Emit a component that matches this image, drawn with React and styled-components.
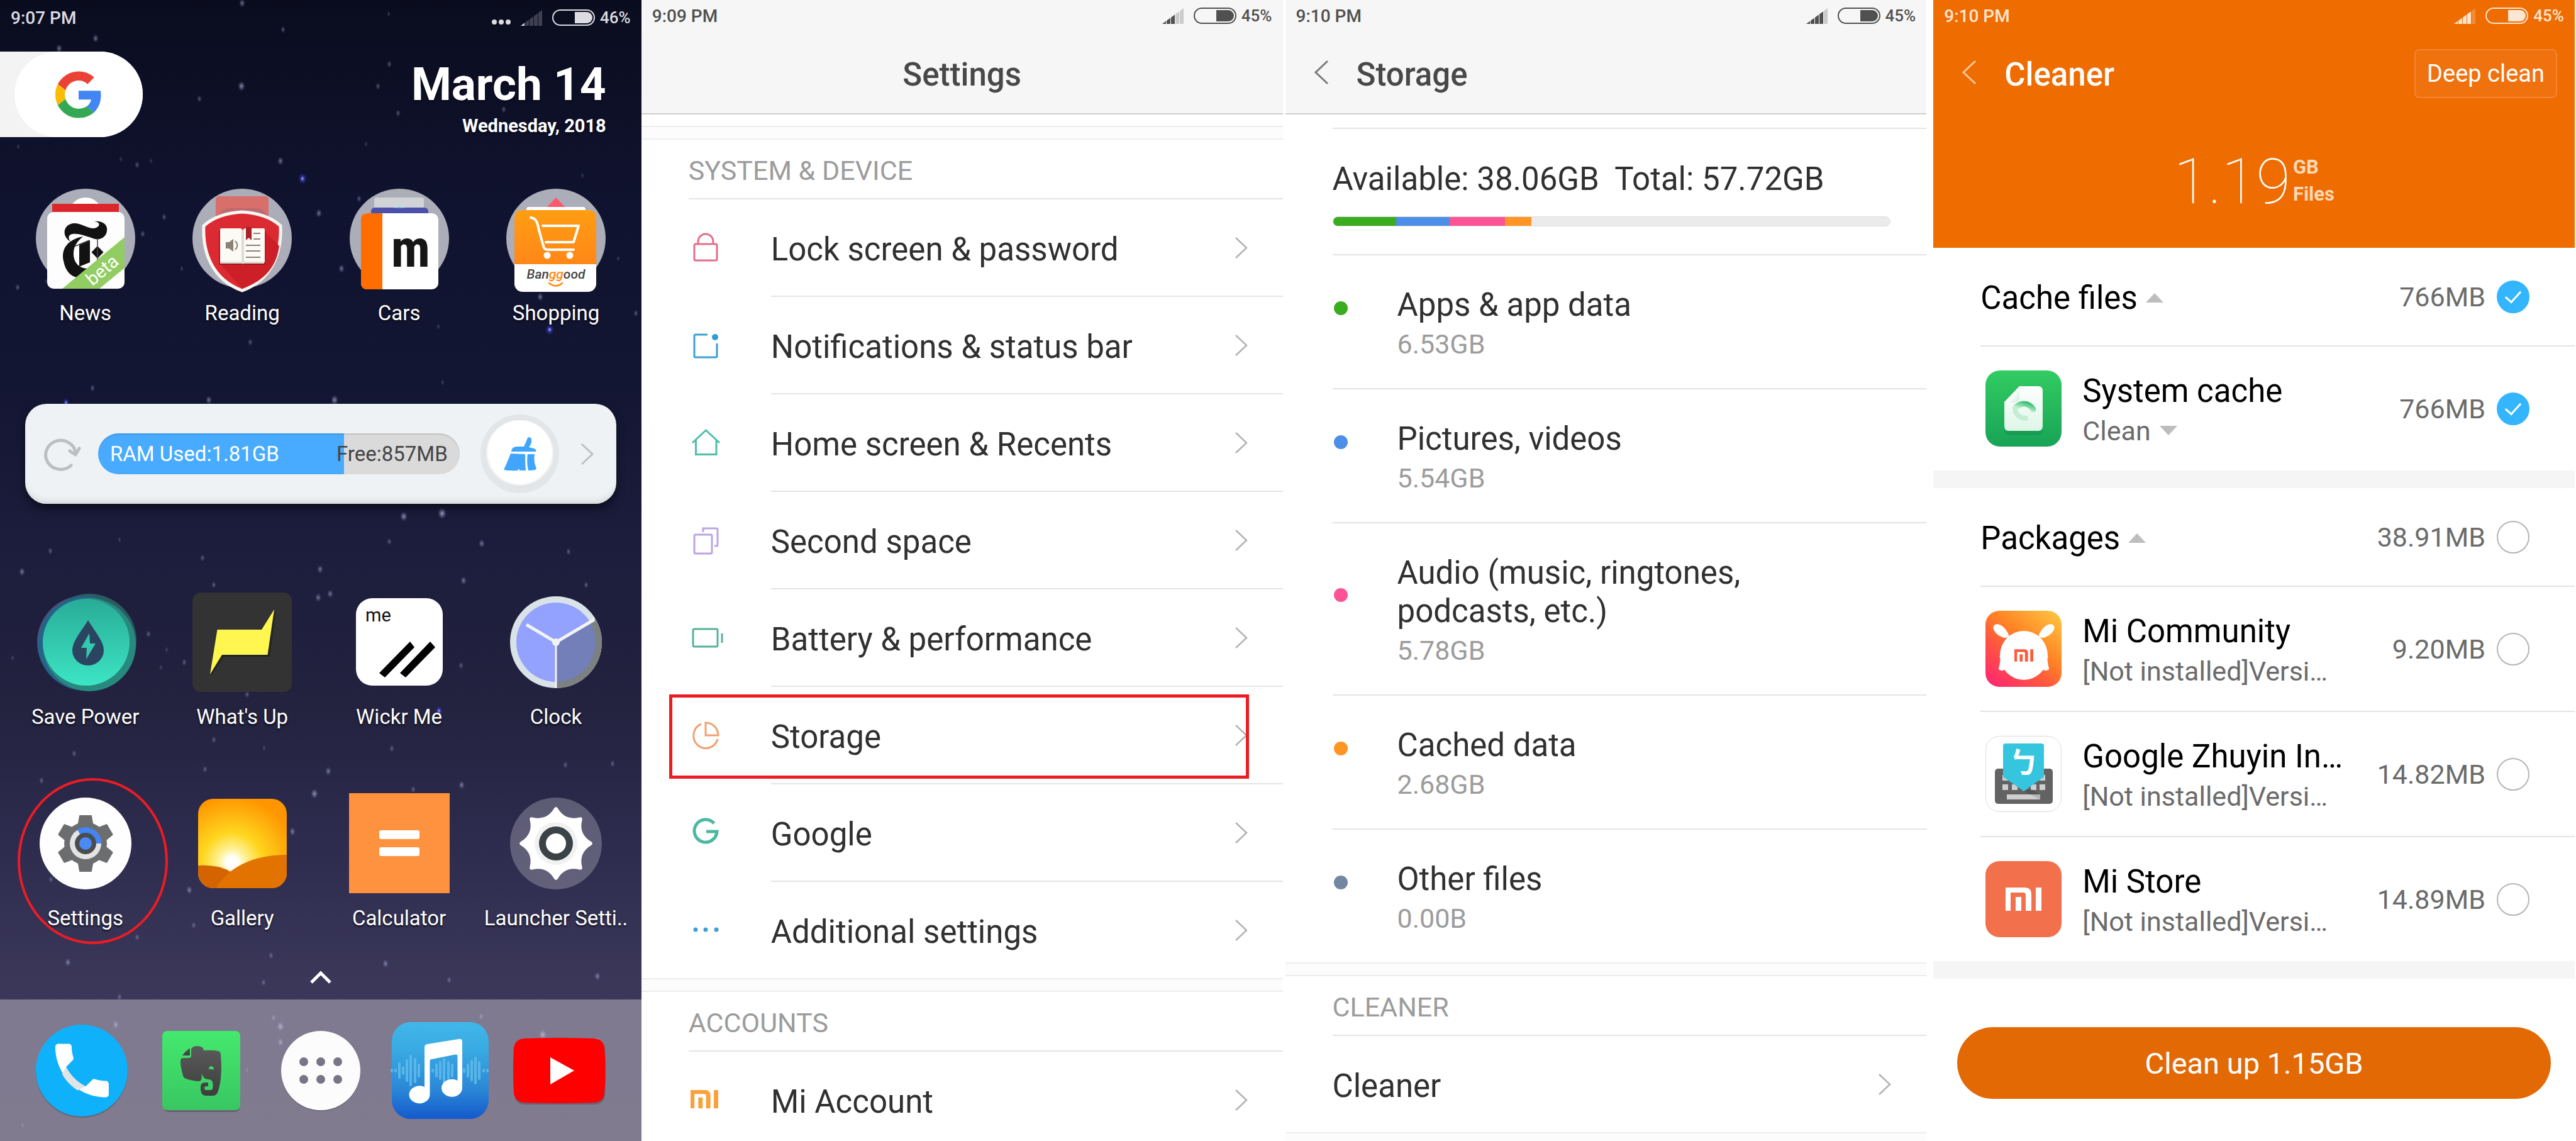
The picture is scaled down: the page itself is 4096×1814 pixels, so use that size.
import React from "react";
import styled, { createGlobalStyle, css } from "styled-components";

const GlobalStyle = createGlobalStyle`
  * {
    box-sizing: border-box;
    margin: 0;
    padding: 0;
  }
  body {
    background: #fff;
    font-family: Roboto, "Noto Sans", sans-serif;
  }
  button {
    font: inherit;
    color: inherit;
    background: none;
    border: none;
    cursor: pointer;
  }
  a {
    color: inherit;
    text-decoration: none;
  }
  ul {
    list-style: none;
  }
  svg {
    display: block;
    flex: none;
    overflow: visible;
    text-shadow: none;
  }
`;

const line = "2px solid #e4e4e4";

const Board = styled.main`
  display: flex;
  height: 100vh;
  overflow: hidden;
  padding-right: 2px;
`;

const Screen = styled.section`
  position: relative;
  flex: 1 1 0;
  min-width: 0;
  display: flex;
  flex-direction: column;
  overflow: hidden;
  margin-left: ${({ $gap }) => $gap || 0}px;
  background: #fff;
  color: #303030;
`;

/* ---------- status bar ---------- */

const StatusRow = styled.div`
  position: relative;
  display: flex;
  align-items: center;
  justify-content: space-between;
  height: ${({ $tall }) => ($tall ? 56 : 50)}px;
  padding: 0 17px;
  font-size: 28px;
  font-weight: 500;
  color: ${({ $color }) => $color};
`;

const StatusIcons = styled.div`
  display: flex;
  align-items: center;
  gap: 8px;
`;

const Percent = styled.span`
  font-size: 26px;
`;

const Dots = styled.svg`
  align-self: flex-end;
  margin-right: 8px;
`;

const Battery = styled.span`
  display: flex;
  justify-content: flex-end;
  width: 68px;
  height: 26px;
  padding: 2px;
  margin-left: 8px;
  border: 2px solid currentColor;
  border-radius: 13px;

  &::after {
    content: "";
    width: 28px;
    border-radius: 0 10px 10px 0;
    background: currentColor;
  }
`;

const Signal = ({ level }) => (
  <svg width="34" height="25" viewBox="0 0 34 25" fill="currentColor">
    {[0, 1, 2, 3, 4].map((i) => {
      const x = i * 7;
      const y1 = 25 - (x * 25) / 34;
      const y2 = 25 - ((x + 6) * 25) / 34;
      return (
        <path
          key={i}
          d={`M${x} 25V${y1}L${x + 6} ${y2}V25z`}
          opacity={i < level ? 1 : 0.25}
        />
      );
    })}
  </svg>
);

const StatusBar = ({ time, percent, level, color, tall, more }) => (
  <StatusRow $color={color} $tall={tall}>
    <span>{time}</span>
    <StatusIcons>
      {more && (
        <Dots width="30" height="8" viewBox="0 0 30 8" fill="currentColor">
          <circle cx="4" cy="0" r="4" />
          <circle cx="15" cy="0" r="4" />
          <circle cx="26" cy="0" r="4" />
        </Dots>
      )}
      <Signal level={level} />
      <Battery />
      <Percent>{percent}</Percent>
    </StatusIcons>
  </StatusRow>
);

/* ---------- home screen ---------- */

const Home = styled(Screen)`
  background: linear-gradient(
    #0a0c1e 0%,
    #10132f 18%,
    #131633 34%,
    #1c1d3c 48%,
    #23223f 62%,
    #2e2c4e 74%,
    #3a3759 86%,
    #3f3957 100%
  );
  color: #fff;
`;

const Sky = styled.svg`
  position: absolute;
  inset: 0;
`;

const HomeTop = styled.div`
  position: relative;
  display: flex;
  justify-content: space-between;
  align-items: flex-end;
  margin-top: 26px;
  padding-right: 56px;
`;

const SearchPill = styled.button`
  display: flex;
  width: 227px;
  height: 136px;
  padding-left: 23px;
  border-radius: 0 68px 68px 0;
  background: #f3f3f3;
`;

const SearchKnob = styled.span`
  display: flex;
  align-items: center;
  justify-content: center;
  width: 204px;
  height: 136px;
  border-radius: 68px;
  background: #fff;
`;

const DateBlock = styled.div`
  display: flex;
  flex-direction: column;
  align-items: flex-end;
  gap: 8px;
  font-weight: 700;
  text-shadow: 0 2px 3px rgba(0, 0, 0, 0.5);
`;

const Today = styled.h1`
  font-size: 73px;
  line-height: 80px;
`;

const Weekday = styled.p`
  font-size: 29px;
  line-height: 36px;
`;

const AppGrid = styled.div`
  position: relative;
  display: grid;
  grid-template-columns: repeat(4, 1fr);
  margin-top: ${({ $top }) => $top}px;
  padding: 0 11px;
`;

const AppButton = styled.button`
  position: relative;
  display: flex;
  flex-direction: column;
  align-items: center;
  gap: 19px;
  font-size: 33px;
  line-height: 40px;
  white-space: nowrap;
  text-shadow: 0 2px 3px rgba(0, 0, 0, 0.8);
`;

const RedCircle = styled.span`
  position: absolute;
  left: 17px;
  top: -24px;
  width: 239px;
  height: 264px;
  border: 4px solid #ed1c24;
  border-radius: 50%;
`;

const Widget = styled.div`
  position: relative;
  display: flex;
  align-items: center;
  height: 159px;
  margin: 124px 40px 0;
  padding: 0 36px 0 30px;
  border-radius: 34px;
  background: #eff2f4;
  box-shadow: 0 8px 14px rgba(0, 0, 0, 0.5), inset 0 -10px 10px -6px #d3d7d8;
`;

const RamBar = styled.div`
  position: relative;
  flex: 1;
  display: flex;
  align-items: center;
  justify-content: space-between;
  height: 65px;
  margin: 0 33px 0 28px;
  padding: 0 19px;
  border-radius: 33px;
  background: linear-gradient(
    90deg,
    #48abff 0 68%,
    #dadada 68% 100%
  );
  box-shadow: inset 0 2px 2px rgba(0, 0, 0, 0.12);
  font-size: 33px;
`;

const RamFree = styled.span`
  color: #444;
`;

const BroomButton = styled.button`
  display: flex;
  align-items: center;
  justify-content: center;
  width: 125px;
  height: 125px;
  margin-right: 35px;
  border: 9px solid #e2e6e8;
  border-radius: 50%;
  background: #fff;
  box-shadow: inset 0 -3px 4px #d5d8da;
`;

const DrawerButton = styled.button`
  position: relative;
  display: flex;
  align-items: center;
  justify-content: center;
  height: 70px;
  margin-top: auto;
`;

const Dock = styled.nav`
  position: relative;
  display: grid;
  grid-template-columns: repeat(5, 1fr);
  justify-items: center;
  align-items: center;
  height: 225px;
  padding: 0 35px;
  background: rgba(222, 215, 222, 0.42);
`;

/* x, y, radius of every star of the wallpaper */
const stars = [
  [385, 5, 4], [152, 61, 4], [94, 77, 4], [619, 102, 3], [618, 22, 2], [450, 47, 3],
  [384, 137, 5], [317, 157, 3], [633, 180, 3], [446, 256, 4], [218, 262, 3], [240, 256, 2],
  [582, 229, 2], [261, 345, 3], [507, 339, 4], [571, 316, 3], [569, 365, 5], [227, 372, 3],
  [543, 427, 4], [289, 427, 2], [697, 519, 2], [859, 472, 4], [398, 544, 3], [28, 457, 3],
  [983, 411, 2], [926, 279, 2], [601, 137, 3], [1011, 498, 3], [74, 447, 2], [29, 233, 2],
  [192, 253, 2], [801, 174, 3], [332, 636, 4], [532, 636, 5], [642, 821, 5], [703, 816, 6],
  [766, 864, 4], [619, 861, 3], [322, 887, 3], [80, 876, 3], [35, 909, 4], [509, 905, 4],
  [737, 923, 4], [525, 944, 4], [506, 950, 4], [904, 877, 3], [340, 930, 3], [236, 1008, 3],
  [293, 1053, 3], [932, 930, 3], [265, 1033, 2], [20, 1046, 2], [733, 1058, 3], [393, 1104, 3],
  [190, 858, 2], [256, 1061, 2], [147, 617, 3], [704, 608, 2], [340, 1176, 3], [420, 1189, 2],
  [118, 1198, 3], [623, 1190, 3], [899, 1216, 3], [974, 1214, 3], [522, 1226, 4], [326, 1223, 3],
  [66, 1241, 3], [500, 1262, 5], [657, 1255, 3], [734, 1248, 4], [465, 1322, 4], [81, 1398, 3],
  [301, 1415, 4], [218, 1490, 3], [431, 1519, 3], [108, 1530, 4], [613, 1532, 4], [950, 1552, 4],
  [419, 1562, 3], [190, 1585, 3], [714, 1558, 3], [184, 1629, 4], [446, 1632, 5], [435, 1618, 3],
  [765, 1616, 3], [863, 1645, 5], [950, 1655, 4], [446, 1657, 4], [393, 1701, 2], [36, 1789, 2],
  [308, 1471, 3],
];

const blueStars = [
  [481, 284, 5], [874, 524, 5], [105, 640, 3], [698, 1130, 4],
];

const Wallpaper = () => (
  <Sky width="100%" height="100%" aria-hidden="true">
    <defs>
      <radialGradient id="star">
        <stop offset="0" stopColor="#c9cdf0" stopOpacity="0.8" />
        <stop offset="1" stopColor="#8288c0" stopOpacity="0" />
      </radialGradient>
      <radialGradient id="blueStar">
        <stop offset="0" stopColor="#b9bdff" />
        <stop offset="0.4" stopColor="#3c40c8" stopOpacity="0.7" />
        <stop offset="1" stopColor="#2226a0" stopOpacity="0" />
      </radialGradient>
    </defs>
    {stars.map(([x, y, r]) => (
      <ellipse key={`${x}-${y}`} cx={x} cy={y} rx={r + 1} ry={r + 3} fill="url(#star)" opacity={r / 6} />
    ))}
    {blueStars.map(([x, y, r]) => (
      <ellipse key={`${x}-${y}`} cx={x} cy={y} rx={r + 2} ry={r + 4} fill="url(#blueStar)" />
    ))}
  </Sky>
);

const GoogleLogo = () => (
  <svg width="68" height="69" viewBox="2 2 44 44">
    <path fill="#EA4335" d="M24 9.5c3.54 0 6.71 1.22 9.21 3.6l6.85-6.85C35.9 2.38 30.47 0 24 0 14.62 0 6.51 5.38 2.56 13.22l7.98 6.19C12.43 13.72 17.74 9.5 24 9.5z" />
    <path fill="#4285F4" d="M46.98 24.55c0-1.57-.15-3.09-.38-4.55H24v9.02h12.94c-.58 2.96-2.26 5.48-4.78 7.18l7.73 6c4.51-4.18 7.09-10.36 7.09-17.65z" />
    <path fill="#FBBC05" d="M10.53 28.59c-.48-1.45-.76-2.99-.76-4.59s.27-3.14.76-4.59l-7.98-6.19C.92 16.46 0 20.12 0 24c0 3.88.92 7.54 2.56 10.78l7.97-6.19z" />
    <path fill="#34A853" d="M24 48c6.48 0 11.93-2.13 15.89-5.81l-7.73-6c-2.15 1.45-4.92 2.3-8.16 2.3-6.26 0-11.57-4.22-13.47-9.91l-7.98 6.19C6.51 42.62 14.62 48 24 48z" />
  </svg>
);

const Icon = ({ children }) => (
  <svg width="160" height="160" viewBox="0 0 160 160" aria-hidden="true">
    {children}
  </svg>
);

const Folder = ({ children }) => (
  <Icon>
    <circle cx="80" cy="80" r="79" fill="#abadb8" />
    {children}
  </Icon>
);

const NewsIcon = () => (
  <Folder>
    <circle cx="80" cy="42" r="27" fill="#fff" />
    <path fill="#db272b" d="M27 25h106v16H27z" />
    <rect x="19" y="38" width="123" height="122" rx="10" fill="#fdfdfd" />
    <g fill="#121212">
      <path d="M56 85C45 79 43 64 54 58C69 50 85 68 97 63C104 60 103 54 94 53C106 51 116 58 114 68C113 78 103 83 95 81C82 77 66 70 56 74C52 77 53 81 56 85z" />
      <path d="M76 77C50 82 41 98 45 116C48 132 57 141 67 142L84 128C68 128 60 116 61 102C62 90 68 84 76 77z" />
      <path d="M70 90L87 83V118L70 125z" />
      <path d="M99 92L108.500 102L99 112L89.500 102z" />
    </g>
    <path d="M99 80V131M62 93L86 83" stroke="#444" strokeWidth="1.500" />
    <path d="M142 78V127L102 160H43z" fill="#92cd63" />
    <text x="107" y="140" fontSize="29" fill="#fff" textAnchor="middle" transform="rotate(-40 107 131)">
      beta
    </text>
  </Folder>
);

const ReadingIcon = () => (
  <Folder>
    <rect x="38" y="13" width="84" height="50" rx="5" fill="#d86f6b" />
    <path d="M42 44Q48 32 60 32H102Q114 32 119 44z" fill="#bd6a70" />
    <path d="M80 38C103 39 126 46 141 60C143 102 128 145 80 163C32 145 17 102 19 60C34 46 57 39 80 38z" fill="#dc2a32" stroke="#f8f6f2" strokeWidth="5" />
    <path d="M115 68L139 92C135 122 119 146 80 160L45 120z" fill="#cc1f27" />
    <path d="M43 68H117V122H43z" fill="#8f151c" opacity="0.7" />
    <path d="M45 66q0-2 2-2H78l3 3 3-3h30q2 0 2 2v52H84l-3 3-3-3H45z" fill="#fbfaf4" />
    <path d="M79 66h4v53h-4zM45 117h70v3H45z" fill="#dcdbd4" />
    <path d="M86 62h9v21l-4.500-4l-4.500 4z" fill="#ac1f27" />
    <path d="M98 72h11M98 81h11M86 91h23M86 100h23M86 110h23" stroke="#8c8174" strokeWidth="2" />
    <path d="M54 86h5l7-5v20l-7-5h-5z" fill="#8c8174" />
    <path d="M69 84q7 7 0 14" fill="none" stroke="#8c8174" strokeWidth="2" />
  </Folder>
);

const CarsIcon = () => (
  <Folder>
    <rect x="40" y="15" width="79" height="40" rx="4" fill="#d1d3d7" />
    <rect x="35" y="31" width="91" height="40" rx="6" fill="#4c50a8" />
    <path d="M70 32q10-3 20 0z" fill="#3fa9e8" />
    <rect x="19" y="41" width="123" height="122" rx="11" fill="#0002" />
    <rect x="19" y="40" width="123" height="121" rx="10" fill="#fff" />
    <path d="M53 40H29q-10 0-10 10v101q0 10 10 10h24z" fill="#ff6d00" />
    <text x="98" y="125" fontSize="84" fontWeight="700" fontFamily="'Roboto Condensed', 'Liberation Sans Narrow', Roboto, sans-serif" fill="#161616" textAnchor="middle">
      m
    </text>
  </Folder>
);

const ShoppingIcon = () => (
  <Folder>
    <path d="M80 15L97 33H63z" fill="#fb5a6c" />
    <rect x="33" y="30" width="94" height="20" rx="4" fill="#fff" />
    <rect x="14" y="35" width="130" height="130" rx="13" fill="#fff" />
    <path d="M14 121V48q0-13 13-13h104q13 0 13 13v73z" fill="url(#bangOrange)" />
    <defs>
      <linearGradient id="bangOrange" x1="0" y1="0" x2="0" y2="1">
        <stop offset="0" stopColor="#ff9d12" />
        <stop offset="1" stopColor="#ff8718" />
      </linearGradient>
    </defs>
    <g fill="none" stroke="#fff" strokeWidth="4" strokeLinecap="round" strokeLinejoin="round">
      <path d="M40 47C50 48 51 58 53 67L60 92Q61 98 67 98H108" />
      <path d="M59 60H116L108 86H64" />
    </g>
    <circle cx="66" cy="107" r="5.500" fill="#fff" />
    <circle cx="102" cy="107" r="5.500" fill="#fff" />
    <text x="80" y="144" fontSize="21" fontWeight="500" fontStyle="italic" fill="#444" textAnchor="middle">
      Ban<tspan fill="#ff8a12">gg</tspan>ood
    </text>
    <path d="M69 151q11 9 21 0" fill="none" stroke="#ff8a12" strokeWidth="2.500" strokeLinecap="round" />
  </Folder>
);

const SavePowerIcon = () => (
  <Icon>
    <defs>
      <linearGradient id="teal" x1="0" y1="0" x2="0" y2="1">
        <stop offset="0" stopColor="#29ab97" />
        <stop offset="1" stopColor="#3ce5c5" />
      </linearGradient>
    </defs>
    <circle cx="77" cy="80" r="74" fill="#5d4a6d" />
    <circle cx="86" cy="78" r="75" fill="#2a5c62" />
    <circle cx="79" cy="82" r="75" fill="#236489" />
    <circle cx="86" cy="84" r="74" fill="#28897f" />
    <circle cx="81" cy="80" r="69" fill="url(#teal)" />
    <path d="M84 45C94 62 109 78 109 93A25 24 0 0 1 59 93C59 78 74 62 84 45z" fill="#2b4560" />
    <path d="M86 66L73 89h9l-1 18l15-25h-9z" fill="#33c9b0" />
  </Icon>
);

const WhatsUpIcon = () => (
  <Icon>
    <rect x="1" y="1" width="158" height="158" rx="13" fill="#333" />
    <path d="M43 63h71l20-32l-10 72H51l-20 31z" fill="#252525" />
    <path d="M40.500 60H111L131 28L120.500 100H48L29 131z" fill="#fff750" />
  </Icon>
);

const WickrIcon = () => (
  <Icon>
    <rect x="11" y="10" width="138" height="139" rx="26" fill="#fff" />
    <text x="26" y="47" fontSize="29" fill="#111">
      me
    </text>
    <path d="M97 79L104 88L57 136L48 129zM129 79L137 88L90 136L81 129z" fill="#000" />
  </Icon>
);

const ClockIcon = () => (
  <Icon>
    <circle cx="80" cy="80" r="73" fill="#d9e2e7" />
    <circle cx="80" cy="80" r="63" fill="#93a2ff" />
    <path d="M80 80L143 43A73 73 0 0 1 80 153z" fill="#7b8081" />
    <path d="M80 80L134 48A63 63 0 0 1 80 143z" fill="#727fb8" />
    <g stroke="#f3f3f3" strokeWidth="5">
      <path d="M80 80L33 52M80 80L141 44" />
      <path d="M80 80V153" strokeWidth="3" />
    </g>
    <circle cx="80" cy="80" r="6" fill="#f3f3f3" />
  </Icon>
);

const SettingsIcon = () => (
  <Icon>
    <circle cx="80" cy="80" r="73" fill="#fefefe" />
    <g fill="#6c6d6e">
      <circle cx="80" cy="80" r="34" />
      {[0, 60, 120, 180, 240, 300].map((deg) => (
        <path key={deg} d="M70 36Q70 35 71 35H89Q90 35 90 36L93 54H67z" transform={`rotate(${deg} 80 80)`} />
      ))}
    </g>
    <circle cx="80" cy="80" r="25" fill="#e3e3e3" />
    <path d="M80 80L67 58A25 25 0 0 1 105 80z" fill="#4285f4" />
    <circle cx="80" cy="80" r="17" fill="#4b4c4e" />
    <circle cx="80" cy="80" r="10" fill="#4a8af4" />
  </Icon>
);

const GalleryIcon = () => (
  <Icon>
    <defs>
      <radialGradient id="sun" cx="64" cy="110" r="105" gradientUnits="userSpaceOnUse">
        <stop offset="0.08" stopColor="#fff" />
        <stop offset="0.2" stopColor="#fff29a" />
        <stop offset="0.45" stopColor="#ffd61e" />
        <stop offset="1" stopColor="#ff9500" />
      </radialGradient>
      <clipPath id="galleryCard">
        <rect x="10" y="9" width="141" height="142" rx="24" />
      </clipPath>
    </defs>
    <g clipPath="url(#galleryCard)">
      <path d="M10 9h141v142H10z" fill="url(#sun)" />
      <path d="M10 115Q42 113 62 125L64 151H10z" fill="#d46400" />
      <path d="M39 151C58 118 96 98 151 98V151z" fill="#e37300" />
    </g>
  </Icon>
);

const CalculatorIcon = () => (
  <Icon>
    <path d="M0 0h160v159H0z" fill="#ff923e" />
    <rect x="48" y="59" width="64" height="14" rx="3" fill="#fff" />
    <rect x="48" y="86" width="64" height="14" rx="3" fill="#fff" />
  </Icon>
);

// eight rounded tips, joined by shallow concave edges
const cog = () => {
  const at = (r, deg) => {
    const a = (deg * Math.PI) / 180;
    return `${80 + r * Math.cos(a)} ${80 + r * Math.sin(a)}`;
  };
  let d = `M${at(56, 3)}`;
  for (let deg = 0; deg < 360; deg += 45) {
    d += `C${at(44, deg + 14)} ${at(44, deg + 31)} ${at(56, deg + 42)}`;
    d += `Q${at(60, deg + 45)} ${at(56, deg + 48)}`;
  }
  return `${d}z`;
};

const LauncherIcon = () => (
  <Icon>
    <circle cx="80" cy="80" r="73" fill="#fff" opacity="0.24" />
    <path d={cog()} fill="#fff" />
    <circle cx="80" cy="80" r="34" fill="#f1f1f1" />
    <circle cx="80" cy="80" r="27" fill="#3b4346" />
    <circle cx="80" cy="80" r="16" fill="#fff" />
  </Icon>
);

const PhoneIcon = () => (
  <Icon>
    <circle cx="80" cy="82" r="73" fill="#0003" />
    <circle cx="80" cy="80" r="73" fill="#10b1fb" />
    <g transform="translate(23.800 23.300) scale(4.720)">
      <path fill="#fff" d="M6.620 10.790c1.440 2.830 3.760 5.140 6.590 6.590l2.200-2.200c.27-.27.67-.36 1.020-.24 1.120.37 2.330.57 3.570.57.55 0 1 .45 1 1V20c0 .55-.45 1-1 1-9.390 0-17-7.610-17-17 0-.55.45-1 1-1h3.500c.55 0 1 .45 1 1 0 1.250.2 2.450.57 3.570.11.35.03.74-.25 1.020l-2.200 2.200z" />
      <path fill="#e1e4e5" d="M6.620 10.790c1.440 2.830 3.760 5.140 6.590 6.590l-2.700 1.300C8.200 17.200 6.400 15.300 5.300 13.200z" />
    </g>
  </Icon>
);

const EvernoteIcon = () => (
  <Icon>
    <defs>
      <linearGradient id="evergreen" x1="0" y1="0" x2="0" y2="1">
        <stop offset="0" stopColor="#44e96d" />
        <stop offset="1" stopColor="#39c662" />
      </linearGradient>
      <linearGradient id="slate" x1="0" y1="0" x2="0" y2="1">
        <stop offset="0" stopColor="#5b5b5b" />
        <stop offset="1" stopColor="#3d3d3d" />
      </linearGradient>
    </defs>
    <rect x="20" y="22" width="121" height="124" rx="8" fill="#0003" />
    <rect x="18" y="17" width="124" height="126" rx="8" fill="url(#evergreen)" />
    <path
      fill="url(#slate)"
      d="M47 65Q47 60 52 60H60Q64 60 64 56V46Q66 41 74 41Q83 41 84 48Q98 47 107 49Q111 50 111 55Q114 90 107 112Q105 120 98 120H89Q79 120 79 110V106Q79 99 86 99H91V105H88Q85 105 85 108Q85 111 88 111H95Q98 111 98.500 107V101Q98.500 95 92 94Q83 94 80.500 84Q82 97 76 97Q64 96 56 93Q52 92 51 88Q47 74 47 65z"
    />
    <path d="M50 56Q55 49 62 44V56z" fill="url(#slate)" />
    <path d="M92 78Q92 73 96.500 73Q100 74 100 79Q96 77 92 78z" fill="#41d667" />
  </Icon>
);

const AppsIcon = () => (
  <Icon>
    <circle cx="80" cy="82" r="63" fill="#0002" />
    <circle cx="80" cy="80" r="63" fill="#fcfcfc" />
    {[66, 94].map((y) =>
      [53, 80, 107].map((x) => <circle key={`${x}-${y}`} cx={x} cy={y} r="7" fill="#7a7586" />)
    )}
  </Icon>
);

const waves = [
  [3, 1], [9, 1], [15, 11], [21, 5], [27, 16], [33, 23], [40, 18], [46, 9], [68, 1], [74, 9],
  [80, 13], [86, 18], [93, 13], [99, 9], [118, 2], [124, 9], [130, 15], [136, 20], [142, 13],
  [149, 1], [155, 1],
];

const MusicIcon = () => (
  <Icon>
    <defs>
      <linearGradient id="musicBlue" x1="0" y1="0" x2="0" y2="1">
        <stop offset="0" stopColor="#41b7e9" />
        <stop offset="0.3" stopColor="#38a9e2" />
        <stop offset="0.7" stopColor="#2a86d6" />
        <stop offset="1" stopColor="#1459cc" />
      </linearGradient>
    </defs>
    <rect x="3" y="3" width="154" height="154" rx="30" fill="url(#musicBlue)" />
    {waves.map(([x, h]) => (
      <path key={x} d={`M${x} ${80 - h}V${80 + h}`} stroke="#5ab6e8" strokeWidth="4" strokeLinecap="round" />
    ))}
    <path
      fill="#fff"
      d="M55 43Q55 39 59 38L109 30Q115 29 115 34V107A16.500 14 0 1 1 107.500 96V57Q107.500 54 104 54.500L66 62Q63.500 62 63.500 65V118A16.500 14 0 1 1 55 106z"
    />
  </Icon>
);

const YoutubeIcon = () => (
  <Icon>
    <path d="M26 31H134Q150 31 152 45Q154 82 152 119Q150 134 134 134H26Q10 134 8 119Q5 82 8 45Q10 31 26 31z" fill="#0003" />
    <path d="M24 29Q80 27 134 29Q150 30 151 44Q154 80 151 116Q150 130 134 131Q80 133 24 131Q9 130 7 116Q5 80 7 44Q9 30 24 29z" fill="#f00" />
    <path d="M65 59L103 80L65 102z" fill="#fff" />
  </Icon>
);

const Broom = () => (
  <svg width="54" height="56" viewBox="0 0 54 56" fill="#41a6fb">
    <path d="M40 2Q44-1 46 4Q47 12 42 17L50 19Q54 20 53 24H14Q14 17 22 16L34 16Q37 10 40 2z" />
    <path d="M13 27L36 28Q36 42 37 54L27 54L26 51L24 54Q12 55 2 53Q8 40 13 27z" />
    <path d="M40 28H51Q49 40 54 51Q54 54 41 54Q38 41 40 28z" />
  </svg>
);

const Chevron = ({ width = 20, height = 34, color = "#b2b2b2", stroke = 2.5, left }) => (
  <svg width={width} height={height} viewBox={`0 0 ${width} ${height}`} fill="none" stroke={color} strokeWidth={stroke}>
    {left ? (
      <path d={`M${width - 1} 1L2 ${height / 2}L${width - 1} ${height - 1}`} />
    ) : (
      <path d={`M1 1L${width - 2} ${height / 2}L1 ${height - 1}`} />
    )}
  </svg>
);

const AppTile = ({ icon, name, marked }) => (
  <AppButton type="button">
    {icon}
    <span>{name}</span>
    {marked && <RedCircle />}
  </AppButton>
);

const HomeScreen = () => (
  <Home>
    <Wallpaper />
    <StatusBar time="9:07 PM" percent="46%" level={1} color="#dcdce2" tall more />
    <HomeTop>
      <SearchPill type="button" aria-label="Google">
        <SearchKnob>
          <GoogleLogo />
        </SearchKnob>
      </SearchPill>
      <DateBlock>
        <Today>March 14</Today>
        <Weekday>Wednesday, 2018</Weekday>
      </DateBlock>
    </HomeTop>
    <AppGrid $top={81}>
      <AppTile icon={<NewsIcon />} name="News" />
      <AppTile icon={<ReadingIcon />} name="Reading" />
      <AppTile icon={<CarsIcon />} name="Cars" />
      <AppTile icon={<ShoppingIcon />} name="Shopping" />
    </AppGrid>
    <Widget>
      <svg width="58" height="52" viewBox="0 0 58 52" fill="none" stroke="#bcbec0" strokeWidth="5" strokeLinecap="round">
        <path d="M43 44A24 23 0 1 1 50 22" />
        <path d="M41 21L50 27L56 17" strokeLinejoin="round" />
      </svg>
      <RamBar>
        <span>RAM Used:1.81GB</span>
        <RamFree>Free:857MB</RamFree>
      </RamBar>
      <BroomButton type="button" aria-label="Clean">
        <Broom />
      </BroomButton>
      <Chevron stroke={3} color="#bdbfc1" />
    </Widget>
    <AppGrid $top={140}>
      <AppTile icon={<SavePowerIcon />} name="Save Power" />
      <AppTile icon={<WhatsUpIcon />} name="What's Up" />
      <AppTile icon={<WickrIcon />} name="Wickr Me" />
      <AppTile icon={<ClockIcon />} name="Clock" />
    </AppGrid>
    <AppGrid $top={101}>
      <AppTile icon={<SettingsIcon />} name="Settings" marked />
      <AppTile icon={<GalleryIcon />} name="Gallery" />
      <AppTile icon={<CalculatorIcon />} name="Calculator" />
      <AppTile icon={<LauncherIcon />} name="Launcher Setti.." />
    </AppGrid>
    <DrawerButton type="button" aria-label="All apps">
      <svg width="34" height="20" viewBox="0 0 34 20" fill="none" stroke="#fff" strokeWidth="5">
        <path d="M2 18L17 3L32 18" />
      </svg>
    </DrawerButton>
    <Dock>
      <button type="button" aria-label="Phone"><PhoneIcon /></button>
      <button type="button" aria-label="Evernote"><EvernoteIcon /></button>
      <button type="button" aria-label="Apps"><AppsIcon /></button>
      <button type="button" aria-label="Music"><MusicIcon /></button>
      <button type="button" aria-label="YouTube"><YoutubeIcon /></button>
    </Dock>
  </Home>
);

/* ---------- settings lists ---------- */

const GreyTop = styled.header`
  flex: none;
  height: 182px;
  border-bottom: 2px solid #cfcfcf;
  background: #f6f6f6;
`;

const TitleRow = styled.div`
  position: relative;
  display: flex;
  align-items: center;
  justify-content: ${({ $center }) => ($center ? "center" : "flex-start")};
  gap: 45px;
  height: 130px;
  padding: ${({ $center }) => ($center ? "0" : "0 0 0 46px")};
  color: ${({ $color }) => $color || "#484848"};
`;

const Title = styled.h2`
  padding-top: 8px;
  font-size: 51px;
  font-weight: 500;
  line-height: 60px;
`;

const Band = styled.div`
  height: ${({ $solid }) => ($solid ? 28 : 22)}px;
  flex: none;
  ${({ $solid }) =>
    $solid
      ? css`
          background: #f5f5f5;
        `
      : css`
          border: solid #ececec;
          border-width: 2px 0;
          background: #fcfcfc;
        `}
`;

const SectionTitle = styled.h3`
  flex: none;
  height: 93px;
  margin-left: 75px;
  padding-top: 24px;
  font-size: 43px;
  font-weight: 400;
  line-height: 50px;
  color: #9c9c9c;
`;

const Row = styled.a`
  position: relative;
  flex: none;
  display: flex;
  height: 155px;
  padding-left: ${({ $plain }) => ($plain ? 75 : 78)}px;
`;

const RowIcon = styled.span`
  display: flex;
  align-items: center;
  width: 128px;
`;

const RowBody = styled.span`
  flex: 1;
  display: flex;
  align-items: center;
  justify-content: space-between;
  padding-right: 56px;
  border-top: ${({ $bare }) => ($bare ? "2px solid transparent" : line)};
`;

const RowLabel = styled.span`
  padding-top: 5px;
  font-size: 51px;
`;

const FullLine = styled.div`
  flex: none;
  height: 2px;
  margin: 0 0 -2px 75px;
  background: #e4e4e4;
`;

const RedBox = styled.span`
  position: absolute;
  left: 44px;
  right: 54px;
  top: 14px;
  height: 134px;
  border: 5px solid #ed1c24;
`;

const Glyph = ({ color, children, width = 3 }) => (
  <svg width="48" height="48" viewBox="0 0 48 48" fill="none" stroke={color} strokeWidth={width}>
    {children}
  </svg>
);

const MiMark = ({ width, height, color }) => (
  <svg width={width} height={height} viewBox="0 0 57 37" preserveAspectRatio="none" fill={color}>
    <path d="M0 0h30q11 0 11 11v26h-9V12q0-4-4-4H8v29H0z" />
    <path d="M16 15h9v22h-9zM48 0h9v37h-9z" />
  </svg>
);

const LockGlyph = () => (
  <Glyph color="#e0708a">
    <rect x="6" y="19" width="36" height="26" rx="2" />
    <path d="M12 19V15A12 12 0 0 1 36 15V19" />
  </Glyph>
);

const NoticeGlyph = () => (
  <Glyph color="#3a9fd2">
    <path d="M27 8H8Q6 8 6 10V42Q6 44 8 44H40Q42 44 42 42V22" />
    <circle cx="39" cy="12" r="5" fill="#2f9bd8" stroke="none" />
  </Glyph>
);

const HomeGlyph = () => (
  <Glyph color="#4dbfa9">
    <path d="M3 25L24.500 5L46 25" />
    <path d="M8.500 21V43.500H41V21" />
  </Glyph>
);

const SpaceGlyph = () => (
  <Glyph color="#baa5e4">
    <rect x="6" y="16" width="28" height="30" rx="2" />
    <path d="M20 12V6H41Q43 6 43 8V32Q43 34 41 34H38" />
  </Glyph>
);

const BatteryGlyph = () => (
  <Glyph color="#57b19d">
    <rect x="4" y="11" width="39" height="28" rx="2" />
    <path d="M50 18V33" />
  </Glyph>
);

const PieGlyph = () => (
  <Glyph color="#f0a071">
    <path d="M17 7A19.500 20 0 1 0 43 31" />
    <path d="M24 5V25H44A20 20 0 0 0 24 5z" />
  </Glyph>
);

const GGlyph = () => (
  <Glyph color="#4bb8a1" width={5}>
    <path d="M37.500 10A18 18 0 1 0 42 23H25" />
  </Glyph>
);

const MoreGlyph = () => (
  <Glyph color="none">
    <g fill="#3fa0d6">
      <circle cx="8" cy="24" r="3.500" />
      <circle cx="24" cy="24" r="3.500" />
      <circle cx="41" cy="24" r="3.500" />
    </g>
  </Glyph>
);

const settings = [
  { label: "Lock screen & password", icon: <LockGlyph /> },
  { label: "Notifications & status bar", icon: <NoticeGlyph /> },
  { label: "Home screen & Recents", icon: <HomeGlyph /> },
  { label: "Second space", icon: <SpaceGlyph /> },
  { label: "Battery & performance", icon: <BatteryGlyph /> },
  { label: "Storage", icon: <PieGlyph />, marked: true },
  { label: "Google", icon: <GGlyph /> },
  { label: "Additional settings", icon: <MoreGlyph /> },
];

const TopSpace = styled.div`
  flex: none;
  height: 18px;
`;

const SettingsRow = ({ label, icon, marked, first }) => (
  <Row href="#">
    <RowIcon>{icon}</RowIcon>
    <RowBody $bare={first}>
      <RowLabel>{label}</RowLabel>
      <Chevron />
    </RowBody>
    {marked && <RedBox />}
  </Row>
);

const SettingsScreen = () => (
  <Screen>
    <GreyTop>
      <StatusBar time="9:09 PM" percent="45%" level={3} color="#505050" />
      <TitleRow $center>
        <Title>Settings</Title>
      </TitleRow>
    </GreyTop>
    <TopSpace />
    <Band />
    <SectionTitle>SYSTEM &amp; DEVICE</SectionTitle>
    <FullLine />
    {settings.map((item, i) => (
      <SettingsRow key={item.label} {...item} first={i === 0} />
    ))}
    <Band />
    <SectionTitle>ACCOUNTS</SectionTitle>
    <FullLine />
    <SettingsRow label="Mi Account" icon={<MiMark width={44} height={29} color="#f9a23b" />} first />
  </Screen>
);

/* ---------- storage ---------- */

const Summary = styled.div`
  margin: 21px 0 0 75px;
  padding: 50px 57px 44px 0;
  border-top: ${line};
`;

const SummaryText = styled.p`
  font-size: 51px;
  line-height: 60px;
  white-space: pre;
`;

const UsageBar = styled.div`
  display: flex;
  height: 16px;
  margin-top: 29px;
  border: 1px solid #dedede;
  border-radius: 8px;
  overflow: hidden;
  background: #ebebeb;
`;

const UsagePart = styled.span`
  background: ${({ $color }) => $color};
`;

const UsageItem = styled.li`
  display: flex;
  margin-left: 75px;
  padding: 48px 240px 45px 2px;
  border-top: ${line};
`;

const Bullet = styled.span`
  flex: none;
  align-self: flex-start;
  display: flex;
  align-items: center;
  width: 101px;
  height: ${({ $lines }) => $lines * 61 + 10}px;

  &::before {
    content: "";
    width: 22px;
    height: 22px;
    border-radius: 50%;
    background: ${({ $color }) => $color};
  }
`;

const UsageName = styled.p`
  font-size: 51px;
  line-height: 61px;
`;

const UsageSize = styled.p`
  margin-top: 7px;
  font-size: 43px;
  line-height: 50px;
  color: #9c9c9c;
`;

const total = 57.72;
const usage = [
  { name: "Apps & app data", size: 6.53, text: "6.53GB", color: "#39ac1f" },
  { name: "Pictures, videos", size: 5.54, text: "5.54GB", color: "#4d8ee8" },
  { name: "Audio (music, ringtones, podcasts, etc.)", size: 5.78, text: "5.78GB", color: "#fe5496", lines: 2 },
  { name: "Cached data", size: 2.68, text: "2.68GB", color: "#ff9524" },
  { name: "Other files", size: 0, text: "0.00B", color: "#7487a0" },
];

const StorageScreen = () => (
  <Screen $gap={4}>
    <GreyTop>
      <StatusBar time="9:10 PM" percent="45%" level={4} color="#505050" />
      <TitleRow>
        <button type="button" aria-label="Back">
          <Chevron left width={22} height={38} color="#7a7a7a" stroke={3} />
        </button>
        <Title>Storage</Title>
      </TitleRow>
    </GreyTop>
    <Summary>
      <SummaryText>{"Available: 38.06GB  Total: 57.72GB"}</SummaryText>
      <UsageBar>
        {usage.map(({ name, size, color }) => (
          <UsagePart key={name} $color={color} style={{ width: `${(size / total) * 100}%` }} />
        ))}
      </UsageBar>
    </Summary>
    <ul>
      {usage.map(({ name, text, color, lines = 1 }) => (
        <UsageItem key={name}>
          <Bullet $color={color} $lines={lines} />
          <div>
            <UsageName>{name}</UsageName>
            <UsageSize>{text}</UsageSize>
          </div>
        </UsageItem>
      ))}
    </ul>
    <Band />
    <SectionTitle>CLEANER</SectionTitle>
    <Row href="#" $plain>
      <RowBody>
        <RowLabel>Cleaner</RowLabel>
        <Chevron />
      </RowBody>
    </Row>
    <Band />
  </Screen>
);

/* ---------- cleaner ---------- */

const OrangeTop = styled.header`
  height: 394px;
  flex: none;
  background: #ef6c00;
  color: #fff;
`;

const DeepClean = styled.button`
  height: 78px;
  margin: 4px 28px 0 auto;
  padding: 0 18px;
  border: 2px solid #f48435;
  border-radius: 8px;
  background: #f0720f;
  color: #fff;
  font-size: 38px;
`;

const Amount = styled.div`
  display: flex;
  justify-content: center;
  gap: 4px;
  padding-top: 60px;
`;

const AmountNumber = styled.span`
  font-size: 100px;
  font-weight: 100;
  line-height: 98px;
`;

const AmountUnit = styled.span`
  display: flex;
  flex-direction: column;
  padding-top: 4px;
  font-size: 31px;
  font-weight: 700;
  line-height: 43px;
  color: #ffd9b8;
`;

const GroupRow = styled.div`
  display: flex;
  align-items: center;
  justify-content: space-between;
  height: 155px;
  margin-left: 75px;
  padding-right: 72px;
`;

const GroupName = styled.button`
  display: flex;
  align-items: center;
  gap: 13px;
  color: #000;
  padding-top: 3px;
  font-size: 51px;
`;

const Arrow = styled.span`
  width: 0;
  border: solid transparent;
  border-width: 0 14px;
  ${({ $down }) =>
    $down
      ? css`
          border-top: 15px solid #bdbdbd;
        `
      : css`
          border-bottom: 15px solid #bdbdbd;
        `}
`;

const Pick = styled.label`
  display: flex;
  align-items: center;
  gap: 18px;
  font-size: 43px;
  color: #6b6b6b;
`;

const Tick = styled.input`
  appearance: none;
  display: flex;
  align-items: center;
  justify-content: center;
  width: 52px;
  height: 52px;
  border: 2px solid #b5b5b5;
  border-radius: 50%;

  &:checked {
    border-color: #33b5ff;
    background: #33b5ff;
  }
  &:checked::after {
    content: "";
    width: 11px;
    height: 21px;
    margin-bottom: 6px;
    border: solid #fff;
    border-width: 0 3px 3px 0;
    transform: rotate(42deg);
  }
`;

const FileRow = styled.li`
  display: flex;
  align-items: center;
  height: 199px;
  margin-left: 75px;
  padding: 0 72px 0 8px;
  border-top: ${line};
`;

const FileText = styled.div`
  flex: 1;
  min-width: 0;
  padding: 2px 0 0 33px;
  white-space: nowrap;
`;

const FileName = styled.p`
  font-size: 51px;
  line-height: 60px;
  color: #000;
`;

const FileNote = styled.div`
  display: flex;
  align-items: center;
  gap: 14px;
  margin-top: 8px;
  font-size: 43px;
  line-height: 50px;
  color: #6b6b6b;
`;

const Footer = styled.footer`
  padding: 77px 38px 0;
`;

const CleanUp = styled.button`
  width: 100%;
  height: 114px;
  border-radius: 57px;
  background: #e36904;
  color: #fff;
  font-size: 47px;
`;

const CacheIcon = () => (
  <svg width="121" height="121" viewBox="0 0 121 121">
    <defs>
      <linearGradient id="cacheGreen" x1="0" y1="0" x2="0" y2="1">
        <stop offset="0" stopColor="#32cc62" />
        <stop offset="1" stopColor="#18a356" />
      </linearGradient>
      <linearGradient id="page" x1="0" y1="0" x2="0" y2="1">
        <stop offset="0" stopColor="#ffffff" />
        <stop offset="1" stopColor="#dcf6e6" />
      </linearGradient>
      <linearGradient id="fold" x1="0" y1="0" x2="1" y2="1">
        <stop offset="0.5" stopColor="#ffffff" />
        <stop offset="1" stopColor="#bfe9cf" />
      </linearGradient>
      <linearGradient id="swirl" x1="1" y1="0" x2="0" y2="1">
        <stop offset="0" stopColor="#2fbf6e" />
        <stop offset="1" stopColor="#2fbf6e" stopOpacity="0" />
      </linearGradient>
    </defs>
    <rect width="121" height="121" rx="23" fill="url(#cacheGreen)" />
    <path d="M31 54h60v40q0 9-9 9H39q-9 0-9-9z" fill="#10854a" opacity="0.35" />
    <path d="M54 25H84Q91 25 91 33V88Q91 96 84 96H37Q30 96 30 88V50z" fill="url(#page)" />
    <path d="M46 62A17 17 0 0 1 76 62" fill="none" stroke="url(#swirl)" strokeWidth="9" strokeLinecap="round" />
    <path d="M47 60A16 16 0 0 0 64 76" fill="none" stroke="#c4edd4" strokeWidth="8" strokeLinecap="round" />
    <path d="M54 25Q56 34 54 44Q53 51 44 51Q36 51 30 53z" fill="url(#fold)" />
  </svg>
);

const CommunityIcon = () => (
  <svg width="121" height="121" viewBox="0 0 121 121">
    <defs>
      <linearGradient id="sunrise" x1="0.1" y1="1" x2="0.9" y2="0">
        <stop offset="0" stopColor="#ff2770" />
        <stop offset="0.35" stopColor="#ff5540" />
        <stop offset="0.6" stopColor="#ff8424" />
        <stop offset="1" stopColor="#ffc240" />
      </linearGradient>
    </defs>
    <rect width="121" height="121" rx="22" fill="url(#sunrise)" />
    <g fill="#fff">
      <ellipse cx="61" cy="71" rx="38" ry="39" />
      <path d="M31 43C22 42 10 32 13 24C17 18 27 22 33 31Q37 36 38 42zM91 43C100 42 112 32 109 24C105 18 95 22 89 31Q85 36 84 42z" />
      <path d="M22 72h5L33 92Q28 97 22 94Q20 92 22 88L24 76zM100 72h-5L89 92Q94 97 100 94Q102 92 100 88L98 76z" />
    </g>
    <svg x="46" y="61" width="30" height="20" viewBox="0 0 57 37" fill="#fb5a3c">
      <path d="M0 0h30q11 0 11 11v26h-9V12q0-4-4-4H8v29H0z" />
      <path d="M16 15h9v22h-9zM48 0h9v37h-9z" />
    </svg>
  </svg>
);

const ZhuyinIcon = () => (
  <svg width="121" height="121" viewBox="0 0 121 121">
    <rect x="0.500" y="0.500" width="120" height="120" rx="22" fill="#fff" stroke="#dcdcdc" />
    <rect x="15" y="52" width="92" height="56" rx="5" fill="#636363" />
    <path d="M27 62h9v9h-9zM86 62h9v9h-9zM27 77h9v9h-9zM42 77h9v9h-9zM72 77h9v9h-9zM86 77h9v9h-9zM34 93h53v8H34z" fill="#cfcfcf" />
    <path d="M61 88L87 101V93L72 84z" fill="#0002" />
    <path d="M28 16q0-4 4-4h57q4 0 4 4v49L61 88L28 65z" fill="#35c5de" />
    <text x="61" y="59" fontSize="47" fontWeight="700" fontFamily="'Noto Sans CJK TC', sans-serif" fill="#fff" textAnchor="middle">
      ㄅ
    </text>
  </svg>
);

const StoreTile = styled.span`
  flex: none;
  display: flex;
  align-items: center;
  justify-content: center;
  width: 121px;
  height: 121px;
  border-radius: 22px;
  background: #f3704d;
`;

const packages = [
  { name: "Mi Community", size: "9.20MB", icon: <CommunityIcon /> },
  { name: "Google Zhuyin In…", size: "14.82MB", icon: <ZhuyinIcon /> },
  {
    name: "Mi Store",
    size: "14.89MB",
    icon: (
      <StoreTile>
        <MiMark width={57} height={37} color="#fff" />
      </StoreTile>
    ),
  },
];

const SizePick = ({ size, checked }) => (
  <Pick>
    {size}
    <Tick type="checkbox" defaultChecked={checked} />
  </Pick>
);

const CleanerScreen = () => (
  <Screen $gap={11}>
    <OrangeTop>
      <StatusBar time="9:10 PM" percent="45%" level={4} color="#ffe6d2" />
      <TitleRow $color="#fff">
        <button type="button" aria-label="Back">
          <Chevron left width={22} height={38} color="#fbc79c" stroke={3} />
        </button>
        <Title>Cleaner</Title>
        <DeepClean type="button">Deep clean</DeepClean>
      </TitleRow>
      <Amount>
        <AmountNumber>1.19</AmountNumber>
        <AmountUnit>
          <span>GB</span>
          <span>Files</span>
        </AmountUnit>
      </Amount>
    </OrangeTop>
    <GroupRow>
      <GroupName type="button">
        Cache files <Arrow />
      </GroupName>
      <SizePick size="766MB" checked />
    </GroupRow>
    <ul>
      <FileRow>
        <CacheIcon />
        <FileText>
          <FileName>System cache</FileName>
          <FileNote>
            Clean <Arrow $down />
          </FileNote>
        </FileText>
        <SizePick size="766MB" checked />
      </FileRow>
    </ul>
    <Band $solid />
    <GroupRow>
      <GroupName type="button">
        Packages <Arrow />
      </GroupName>
      <SizePick size="38.91MB" />
    </GroupRow>
    <ul>
      {packages.map(({ name, size, icon }) => (
        <FileRow key={name}>
          {icon}
          <FileText>
            <FileName>{name}</FileName>
            <FileNote>[Not installed]Versi…</FileNote>
          </FileText>
          <SizePick size={size} />
        </FileRow>
      ))}
    </ul>
    <Band $solid />
    <Footer>
      <CleanUp type="button">Clean up 1.15GB</CleanUp>
    </Footer>
  </Screen>
);

const App = () => {
  return (
    <>
      <GlobalStyle />
      <Board>
        <HomeScreen />
        <SettingsScreen />
        <StorageScreen />
        <CleanerScreen />
      </Board>
    </>
  );
};

export default App;
